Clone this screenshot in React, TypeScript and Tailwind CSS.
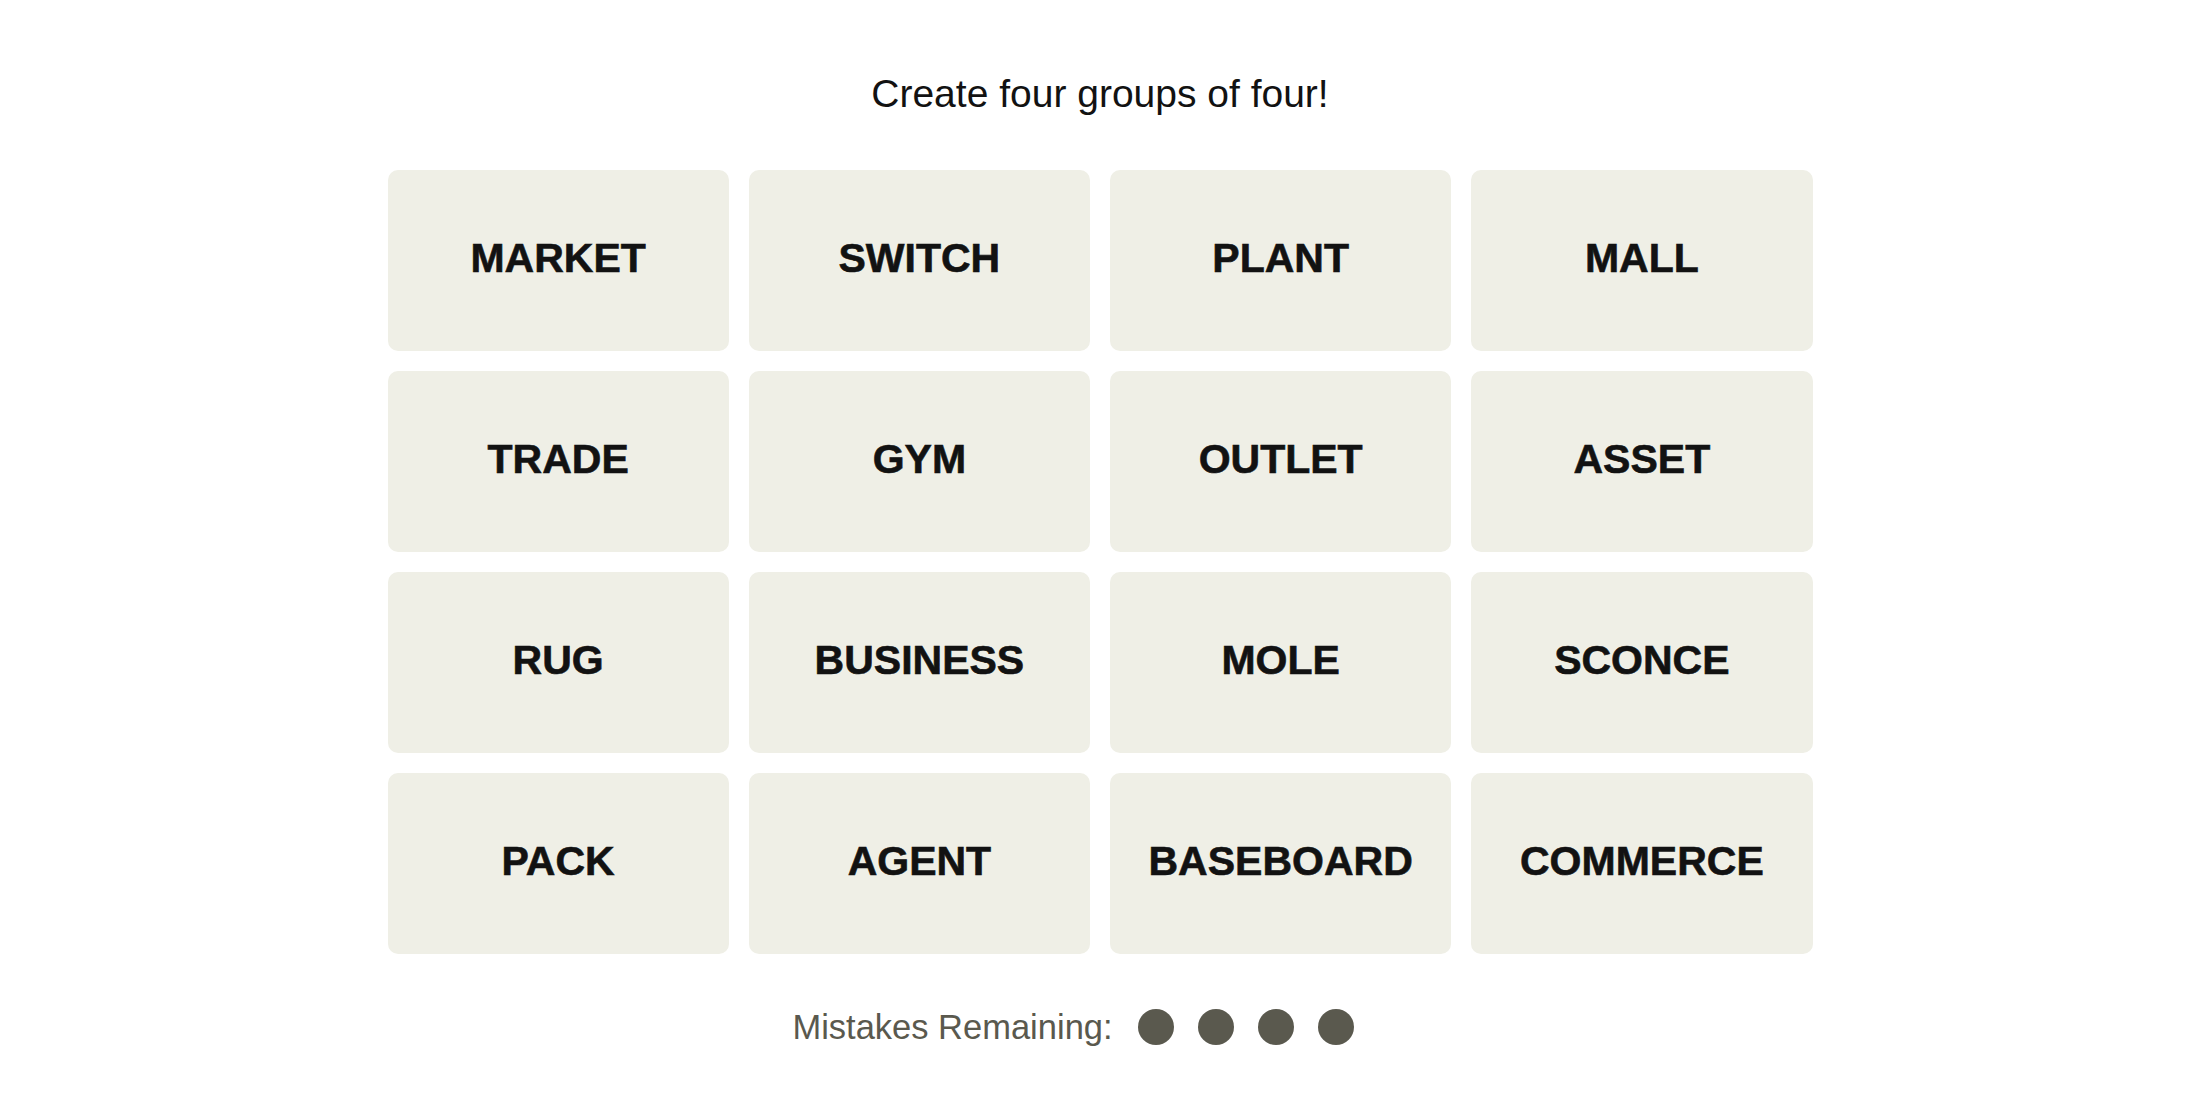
const WORDS = [
  "MARKET",
  "SWITCH",
  "PLANT",
  "MALL",
  "TRADE",
  "GYM",
  "OUTLET",
  "ASSET",
  "RUG",
  "BUSINESS",
  "MOLE",
  "SCONCE",
  "PACK",
  "AGENT",
  "BASEBOARD",
  "COMMERCE",
];

export default function App() {
  return (
    <div
      className="min-h-[1100px] w-full bg-white flex flex-col items-center pt-[74px]"
      style={{ fontFamily: '"Liberation Sans", Arial, sans-serif' }}
    >
      <p className="text-[39px] leading-none h-[39px] text-[#121212]">
        Create four groups of four!
      </p>

      <div className="mt-[57px] w-[1425px] grid grid-cols-4 gap-x-[20px] gap-y-[20px]">
        {WORDS.map((w) => (
          <button
            key={w}
            className="h-[181px] rounded-[10px] bg-[#efefe6] flex items-center justify-center pb-[5px] text-[41px] font-bold leading-none text-[#121212] [-webkit-text-stroke:0.6px_#121212]"
          >
            {w}
          </button>
        ))}
      </div>

      <div className="mt-[55px] flex items-center pr-[54px] h-[36px]">
        <span className="text-[34.5px] leading-none text-[#5a594e]">
          Mistakes Remaining:
        </span>
        <div className="ml-[25px] flex items-center gap-[24px]">
          {[0, 1, 2, 3].map((i) => (
            <span
              key={i}
              className="block w-[36px] h-[36px] rounded-full bg-[#5a594e]"
            />
          ))}
        </div>
      </div>
    </div>
  );
}
